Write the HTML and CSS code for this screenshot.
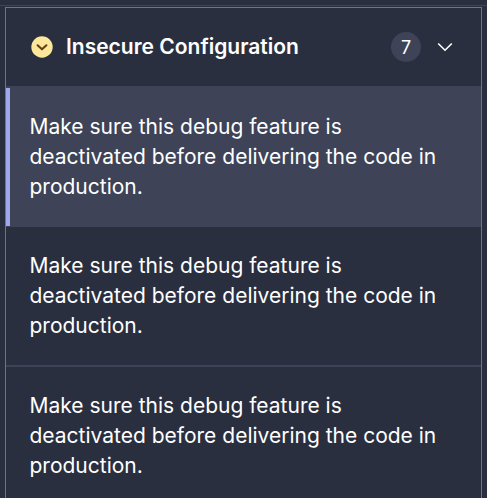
FILE: index.html
```
<!DOCTYPE html>
<html lang="en">
<head>
<meta charset="utf-8">
<title>Issues</title>
<link rel="stylesheet" href="styles.css">
</head>
<body>
<div class="page">
  <section class="card">
    <header class="header">
      <svg class="severity" viewBox="0 0 22 22"><circle cx="11" cy="11" r="10.7" fill="#fde79b"/><path d="M6.6 9.3 11 13.3l4.4-4" fill="none" stroke="#693d13" stroke-width="2.1" stroke-linecap="round" stroke-linejoin="round"/></svg>
      <h2 class="title">Insecure Configuration</h2>
      <span class="count">7</span>
      <svg class="chevron" viewBox="0 0 16 10"><path d="M1.2 1.5 8 8.2l6.8-6.7" fill="none" stroke="#fff" stroke-width="1.6"/></svg>
    </header>
    <ul class="issues">
      <li class="issue selected">Make sure this debug feature is deactivated before delivering the code in production.</li>
      <li class="issue">Make sure this debug feature is deactivated before delivering the code in production.</li>
      <li class="issue last">Make sure this debug feature is deactivated before delivering the code in production.</li>
    </ul>
  </section>
</div>
</body>
</html>
```
FILE: styles.css
```
* { box-sizing: border-box; }
body {
  margin: 0;
  height: 498px;
  padding-top: 5px;
  overflow: hidden;
  background: #2a2f40;
  color: #fff;
  font-family: Inter, "Liberation Sans", sans-serif;
}
.page {
  height: 493px;
  padding: 1px 5px 0;
  border-top: 1px solid #3e4357;
}
.card {
  height: 491px;
  border: 1px solid #6a7590;
  border-bottom: 0;
}
.header {
  display: flex;
  align-items: center;
  height: 78px;
  padding: 0 28px 0 25px;
}
.severity { width: 22px; height: 22px; }
.title {
  flex: 1;
  margin: 0 0 0 13px;
  font-size: 21px;
  line-height: 30px;
  font-weight: 600;
}
.count {
  width: 30px;
  height: 30px;
  margin-right: 16px;
  border-radius: 50%;
  background: #3e4357;
  font-size: 18px;
  line-height: 31px;
  text-align: center;
}
.chevron { width: 16px; height: 10px; }
.issues {
  margin: 0;
  padding: 0;
  list-style: none;
}
.issue {
  height: 140px;
  padding: 24px 24px 24px 23.5px;
  border-bottom: 2px solid #3e4357;
  font-size: 21px;
  line-height: 30px;
}
.selected {
  height: 141px;
  padding-top: 26px;
  border-bottom-width: 1px;
  background: linear-gradient(#9fa8ed, #9fa8ed) 0 2px / 4px 138px no-repeat #3e4357;
}
.last {
  height: 130px;
  padding-bottom: 0;
  border-bottom: 0;
}
```
